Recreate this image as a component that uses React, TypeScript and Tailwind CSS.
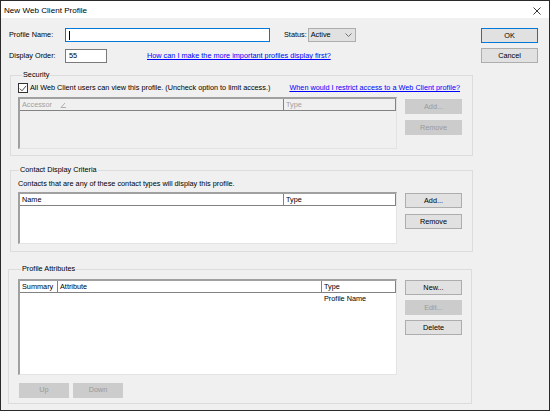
import React from 'react';

const font = { fontFamily: '"Liberation Sans", Arial, sans-serif' };

function Btn({ label, disabled, primary }: { label: string; disabled?: boolean; primary?: boolean }) {
  return (
    <div
      className={`flex h-[15px] w-[57px] items-center justify-center border text-[7.3px] leading-none ${
        disabled
          ? 'border-[#cccccc] bg-[#cccccc] text-[#9a9a9a]'
          : primary
          ? 'border-[#0078d7] bg-[#e1e1e1] text-black'
          : 'border-[#adadad] bg-[#e1e1e1] text-black'
      }`}
    >
      {label}
    </div>
  );
}

function SortMark() {
  return (
    <svg width="7" height="6" viewBox="0 0 7 6" className="ml-[8px]">
      <path d="M1 5.5 L5 1 M1 5.5 H6" stroke="#a0a0a0" strokeWidth="0.8" fill="none" />
    </svg>
  );
}

type Col = { label: string; width?: string; mark?: boolean };

function ListBox({
  cols,
  height,
  disabled,
  rows,
}: {
  cols: Col[];
  height: string;
  disabled?: boolean;
  rows?: string[][];
}) {
  return (
    <div
      className={`flex w-[379px] flex-col border border-t-2 border-l-2 border-[#a0a0a0] border-r-[#e3e3e3] border-b-[#e3e3e3] ${height} ${
        disabled ? 'bg-[#f0f0f0]' : 'bg-white'
      }`}
    >
      <div className={`flex h-[12px] border-b border-[#828282] text-[7.3px] leading-none ${disabled ? 'text-[#a0a0a0]' : 'text-black'}`}>
        {cols.map((c) => (
          <div key={c.label} className={`flex items-center border-r border-[#828282] pl-[2px] ${c.width ?? 'flex-1'}`}>
            {c.label}
            {c.mark && <SortMark />}
          </div>
        ))}
      </div>
      {rows?.map((r, ri) => (
        <div key={ri} className="flex h-[12px] text-[7.3px] leading-none text-black">
          {r.map((cell, ci) => (
            <div key={ci} className={`flex items-center pl-[2px] ${cols[ci].width ?? 'flex-1'}`}>
              {cell}
            </div>
          ))}
        </div>
      ))}
    </div>
  );
}

function Group({ title, className, legendClass, children }: { title: string; className?: string; legendClass?: string; children: React.ReactNode }) {
  return (
    <fieldset className={`border border-[#dcdcdc] pl-[7px] pr-[9px] ${className ?? ''}`}>
      <legend className={`px-[1px] text-[7.3px] leading-[10px] text-black ${legendClass ?? 'ml-[3px]'}`}>{title}</legend>
      {children}
    </fieldset>
  );
}

export default function App() {
  return (
    <div className="h-[413px] w-[552px] whitespace-nowrap bg-white" style={font}>
      <div className="flex h-[411px] w-[550px] flex-col border border-[#2a2a2a]">
        {/* Title bar */}
        <div className="flex h-[17px] shrink-0 items-center justify-between bg-white pl-[3px] pr-[8px] pt-[3px]">
          <span className="text-[8.1px] leading-none text-black">New Web Client Profile</span>
          <svg width="8" height="8" viewBox="0 0 8 8">
            <path d="M0.5 0.5 L7.5 7.5 M7.5 0.5 L0.5 7.5" stroke="#222" strokeWidth="0.9" />
          </svg>
        </div>

        <div className="flex flex-1 bg-[#f0f0f0] pt-[10px]">
          {/* Left column */}
          <div className="flex w-[472px] flex-col">
            <div className="flex flex-col gap-[7px] pl-[8px] text-[7.3px] leading-none text-black">
              <div className="flex h-[14px] items-center">
                <span className="w-[56px]">Profile Name:</span>
                <div className="flex h-[14px] w-[205px] items-center border border-[#0078d7] bg-white pl-[3px]">
                  <div className="h-[9px] w-px bg-black" />
                </div>
                <span className="ml-[14px] mr-[1px]">Status:</span>
                <div className="flex h-[14px] w-[48px] items-center justify-between border border-[#adadad] bg-[#e1e1e1] pl-[2px] pr-[3px]">
                  <span>Active</span>
                  <svg width="7" height="4" viewBox="0 0 7 4">
                    <path d="M0.5 0.5 L3.5 3.5 L6.5 0.5" stroke="#555" strokeWidth="0.8" fill="none" />
                  </svg>
                </div>
              </div>
              <div className="flex h-[14px] items-center">
                <span className="w-[56px]">Display Order:</span>
                <div className="flex h-[14px] w-[42px] items-center border border-[#7a7a7a] bg-white pl-[3px]">55</div>
                <span className="ml-[40px] text-[#0000ff] underline">How can I make the more important profiles display first?</span>
              </div>
            </div>

            <div className="mt-[7px] flex flex-col gap-[9px] pl-[9px]">
              <Group title="Security" legendClass="ml-[4px]">
                <div className="mt-[3px] flex h-[10px] items-center justify-between text-[7.3px] leading-none">
                  <div className="flex items-center">
                    <div className="mr-[2px] flex h-[10px] w-[10px] items-center justify-center border border-[#333] bg-white">
                      <svg width="8" height="7" viewBox="0 0 8 7">
                        <path d="M0.8 3.6 L3 5.8 L7.2 0.8" stroke="#333" strokeWidth="0.9" fill="none" />
                      </svg>
                    </div>
                    <span className="text-black">All Web Client users can view this profile. (Uncheck option to limit access.)</span>
                  </div>
                  <span className="mr-[3px] text-[#0000ff] underline">When would I restrict access to a Web Client profile?</span>
                </div>
                <div className="mt-[4px] flex items-start gap-[8px] pb-[6px]">
                  <ListBox
                    disabled
                    height="h-[52px]"
                    cols={[
                      { label: 'Accessor', width: 'w-[264px]', mark: true },
                      { label: 'Type', width: 'flex-1' },
                    ]}
                  />
                  <div className="mt-[2px] flex flex-col gap-[6px]">
                    <Btn label="Add..." disabled />
                    <Btn label="Remove" disabled />
                  </div>
                </div>
              </Group>

              <Group title="Contact Display Criteria" legendClass="ml-[1px]">
                <div className="mt-[4px] flex h-[10px] items-center text-[7.3px] leading-none text-black">
                  Contacts that are any of these contact types will display this profile.
                </div>
                <div className="mt-[3px] flex items-start gap-[8px] pb-[7px]">
                  <ListBox
                    height="h-[52px]"
                    cols={[
                      { label: 'Name', width: 'w-[264px]' },
                      { label: 'Type', width: 'flex-1' },
                    ]}
                  />
                  <div className="mt-[1px] flex flex-col gap-[6px]">
                    <Btn label="Add..." />
                    <Btn label="Remove" />
                  </div>
                </div>
              </Group>

              <Group title="Profile Attributes" className="-ml-[2px] mr-[3px] mt-[3px] pl-[9px]" legendClass="ml-[3px]">
                <div className="mt-[5px] flex items-start gap-[8px]">
                  <ListBox
                    height="h-[96px]"
                    cols={[
                      { label: 'Summary', width: 'w-[38px]' },
                      { label: 'Attribute', width: 'w-[264px]' },
                      { label: 'Type', width: 'flex-1' },
                    ]}
                    rows={[['', '', 'Profile Name']]}
                  />
                  <div className="mt-[1px] flex flex-col gap-[5px]">
                    <Btn label="New..." />
                    <Btn label="Edit..." disabled />
                    <Btn label="Delete" />
                  </div>
                </div>
                <div className="mt-[8px] flex gap-[4px] pb-[5px] pl-[1px]">
                  <div className="flex h-[15px] w-[50px] items-center justify-center bg-[#cccccc] text-[7.3px] text-[#9a9a9a]">Up</div>
                  <div className="flex h-[15px] w-[50px] items-center justify-center bg-[#cccccc] text-[7.3px] text-[#9a9a9a]">Down</div>
                </div>
              </Group>
            </div>
          </div>

          {/* Right column */}
          <div className="ml-[8px] flex flex-col gap-[5px]">
            <Btn label="OK" primary />
            <Btn label="Cancel" />
          </div>
        </div>
      </div>
    </div>
  );
}
